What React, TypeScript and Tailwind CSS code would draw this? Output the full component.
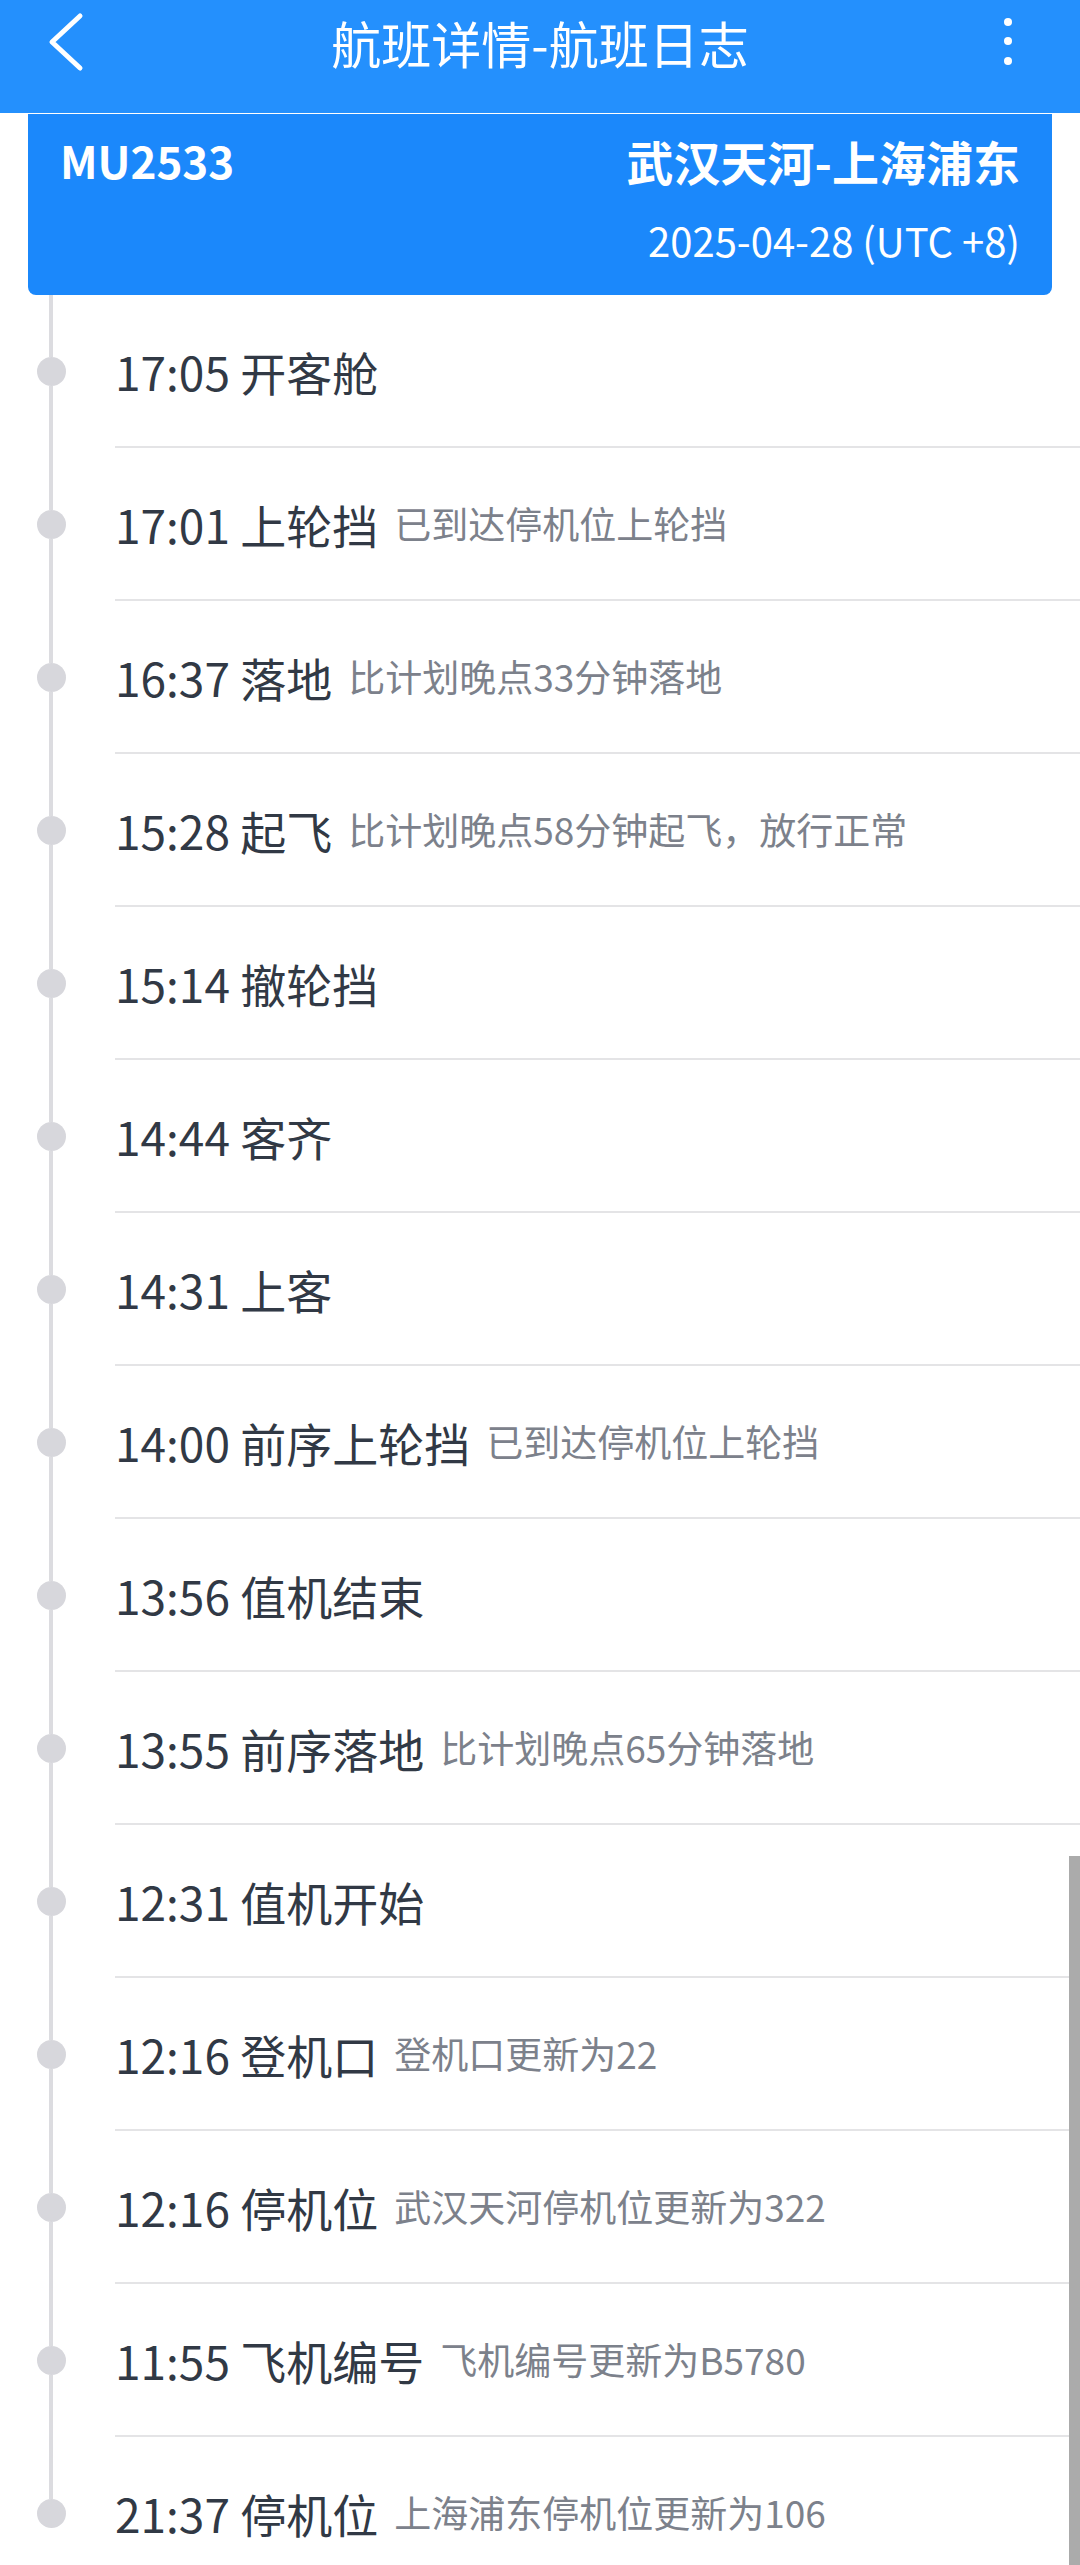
import React from 'react';

interface LogItem {
    time: string;
    title: string;
    desc?: string;
}

const logs: LogItem[] = [
    { time: '17:05', title: '开客舱' },
    { time: '17:01', title: '上轮挡', desc: '已到达停机位上轮挡' },
    { time: '16:37', title: '落地', desc: '比计划晚点33分钟落地' },
    { time: '15:28', title: '起飞', desc: '比计划晚点58分钟起飞，放行正常' },
    { time: '15:14', title: '撤轮挡' },
    { time: '14:44', title: '客齐' },
    { time: '14:31', title: '上客' },
    { time: '14:00', title: '前序上轮挡', desc: '已到达停机位上轮挡' },
    { time: '13:56', title: '值机结束' },
    { time: '13:55', title: '前序落地', desc: '比计划晚点65分钟落地' },
    { time: '12:31', title: '值机开始' },
    { time: '12:16', title: '登机口', desc: '登机口更新为22' },
    { time: '12:16', title: '停机位', desc: '武汉天河停机位更新为322' },
    { time: '11:55', title: '飞机编号', desc: '飞机编号更新为B5780' },
    { time: '21:37', title: '停机位', desc: '上海浦东停机位更新为106' },
];

const App: React.FC = () => {
    return (
        <div className="relative w-[1080px] h-[2565px] overflow-hidden bg-white font-['Noto_Sans_CJK_SC',sans-serif]">
            {/* top bar */}
            <div className="h-[113px] bg-[#2490FD]">
                <div className="h-[84px] flex items-center">
                    <div className="flex-1 flex items-center">
                        <svg className="ml-[44px]" width="40" height="64" viewBox="0 0 40 64" fill="none">
                            <polyline points="36,6 8,32 36,58" stroke="white" strokeWidth="5" strokeLinecap="round" strokeLinejoin="round" />
                        </svg>
                    </div>
                    <div className="text-white text-[50px] leading-none">航班详情-航班日志</div>
                    <div className="flex-1 flex justify-end items-center">
                        <svg className="mr-[66px]" width="12" height="54" viewBox="0 0 12 54" fill="white">
                            <circle cx="6" cy="7" r="4" />
                            <circle cx="6" cy="26" r="4" />
                            <circle cx="6" cy="46" r="4" />
                        </svg>
                    </div>
                </div>
            </div>

            {/* flight card */}
            <div className="mx-[28px] mt-[1px] h-[181px] rounded-b-[8px] bg-[#1B88FB] px-[32px] pt-[14px] text-white">
                <div className="h-[64px] flex items-center justify-between">
                    <span className="text-[44px] font-bold leading-none">MU2533</span>
                    <span className="text-[47px] font-bold leading-none">武汉天河-上海浦东</span>
                </div>
                <div className="mt-[24px] h-[48px] flex items-center justify-end">
                    <span className="text-[40px] leading-none">2025-04-28 (UTC +8)</span>
                </div>
            </div>

            {/* timeline */}
            <div>
                {logs.map((item, i) => (
                    <div key={i} className="h-[153px] flex">
                        <div className="w-[115px] shrink-0">
                            <div className="w-[102px] h-full flex flex-col items-center">
                                <div className="flex-1 w-[4px] bg-[#DCDCE0]" />
                                <div className="w-[29px] h-[29px] rounded-full bg-[#D7D7DC] shrink-0" />
                                <div className={i === logs.length - 1 ? 'flex-1 w-[4px]' : 'flex-1 w-[4px] bg-[#DCDCE0]'} />
                            </div>
                        </div>
                        <div className="flex-1 flex items-center border-b-2 border-[#E4E4E6]">
                            <span className="text-[46px] leading-none text-[#313945]">{item.time} {item.title}</span>
                            {item.desc && (
                                <span className="ml-[16px] text-[37px] leading-none text-[#7C818B]">{item.desc}</span>
                            )}
                        </div>
                    </div>
                ))}
            </div>

            {/* scrollbar */}
            <div className="absolute right-0 top-[1856px] bottom-0 w-[11px] bg-[#ABABAB]" />
        </div>
    );
};

export default App;
